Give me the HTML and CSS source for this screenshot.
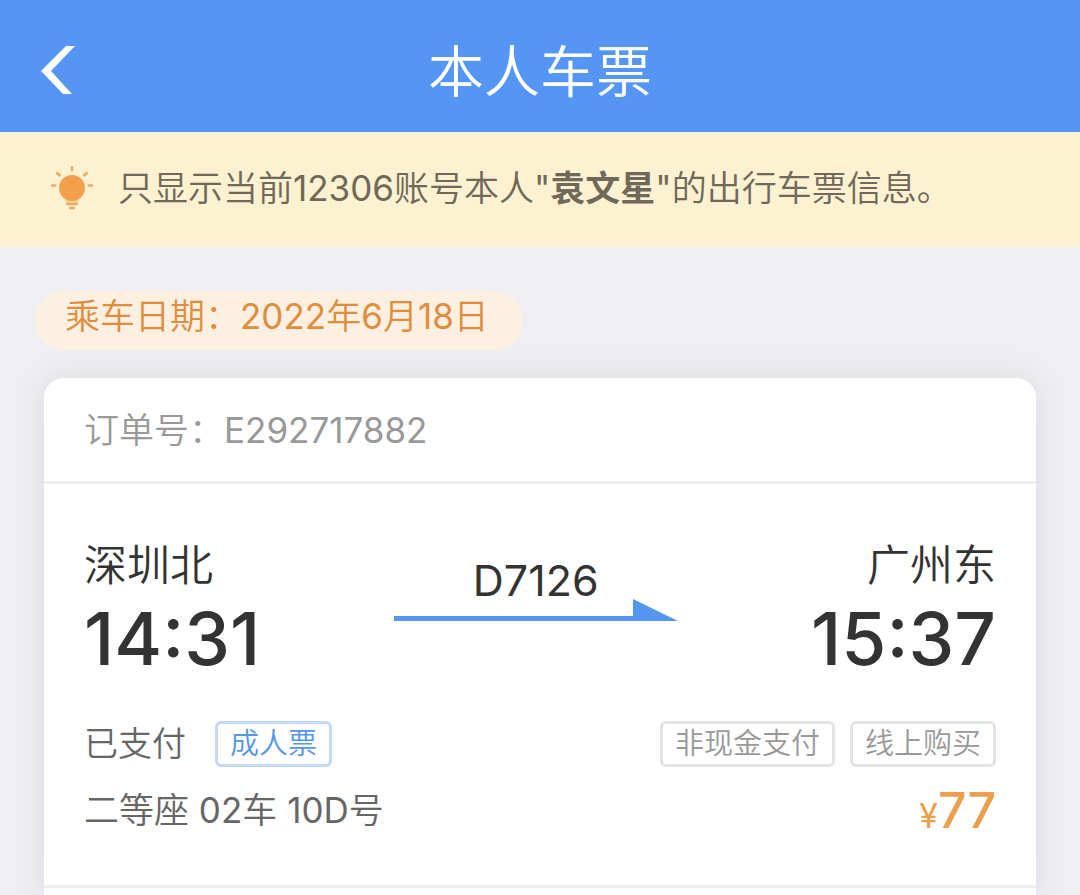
FILE: index.html
```html
<!DOCTYPE html>
<html lang="zh-CN">
<head>
<meta charset="utf-8">
<meta name="viewport" content="width=device-width, initial-scale=1">
<title>本人车票</title>
<link rel="stylesheet" href="styles.css">
</head>
<body class="page">
<header class="topbar">
  <button class="back" type="button" aria-label="返回">
    <svg class="back-icon" viewBox="0 0 34 48" aria-hidden="true"><path d="M25 0H34L10 25L31 48H22L0 25Z" fill="#fff"/></svg>
  </button>
  <h1 class="title">本人车票</h1>
</header>
<div class="notice">
  <svg class="bulb" viewBox="0 0 44 44" aria-hidden="true">
    <path d="M15 34H29L27 37H17Z" fill="#f8cf96"/>
    <circle cx="22" cy="22" r="13" fill="#f2a04c"/>
    <g fill="none" stroke="#eeaa62" stroke-width="2.5">
      <path d="M22 0V5M6.500 6.500L10.500 10M37.500 6.500L33.500 10M1 19.500H6.500M37.500 19.500H43"/>
      <path d="M16 38H28M19 42H25"/>
    </g>
  </svg>
  <p class="notice-text">只显示当前<span class="num">12306</span>账号本人<span class="num">"</span><strong>袁文星</strong><span class="num">"</span>的出行车票信息。</p>
</div>
<main class="content">
  <p class="date">乘车日期：<span class="num">2022</span>年<span class="num">6</span>月<span class="num">18</span>日</p>
  <article class="card">
    <p class="order">订单号：<span class="num">E292717882</span></p>
    <section class="ticket">
      <div class="journey">
        <div class="stop">
          <p class="station">深圳北</p>
          <p class="time">14:31</p>
        </div>
        <div class="route">
          <p class="train num">D7126</p>
          <svg class="arrow" viewBox="0 0 284 22" aria-hidden="true"><path d="M0 17H239V0L284 22H0Z" fill="#5596f0"/></svg>
        </div>
        <div class="stop stop-end">
          <p class="station">广州东</p>
          <p class="time">15:37</p>
        </div>
      </div>
      <div class="status">
        <span class="paid">已支付</span>
        <span class="tag tag-blue">成人票</span>
        <span class="tag tag-first">非现金支付</span>
        <span class="tag">线上购买</span>
      </div>
      <div class="seat-row">
        <p class="seat">二等座<span class="num"> 02</span>车<span class="num"> 10D</span>号</p>
        <p class="price"><span class="yen">¥</span>77</p>
      </div>
    </section>
  </article>
</main>
</body>
</html>
```
FILE: styles.css
```css
* { box-sizing: border-box; }
.page {
  margin: 0;
  min-height: 100vh;
  display: flex;
  flex-direction: column;
  background: #eeeef3;
  color: #333;
  font-family: Inter, "Noto Sans CJK SC", sans-serif;
  font-size: 34px;
  font-weight: 350;
  line-height: 60px;
}
p, h1 { margin: 0; }
svg { display: block; }
.num { font-weight: 400; }
.topbar {
  display: grid;
  grid-template-columns: 120px 1fr 120px;
  align-items: center;
  height: 132px;
  padding-top: 12px;
  background: #5596f4;
  color: #fff;
}
.back {
  height: 84px;
  padding: 0 0 4px 41px;
  border: 0;
  background: none;
}
.back-icon { width: 34px; height: 48px; }
.title {
  font-size: 56px;
  font-weight: 350;
  line-height: 80px;
  text-align: center;
}
.notice {
  display: flex;
  align-items: center;
  gap: 24px;
  padding: 26px 50px 29px;
  background: #fcf2d2;
  color: #706858;
  font-size: 35px;
}
.bulb { flex: none; width: 44px; height: 44px; }
.notice-text strong { font-weight: 700; }
.content {
  flex: 1;
  display: flex;
  flex-direction: column;
  padding: 44px 44px 0;
}
.date {
  align-self: flex-start;
  margin-left: -9px;
  padding: 0 34px 8px 30px;
  border-radius: 30px;
  background: #fdf0e0;
  color: #df8e3f;
  font-size: 35px;
  line-height: 51px;
}
.card {
  flex: 1;
  margin-top: 28px;
  border-radius: 20px 20px 0 0;
  background: #fff;
  box-shadow: 0 0 32px rgba(60, 60, 80, 0.1);
}
.order {
  padding: 22px 40px 21px;
  border-bottom: 3px solid #efeff0;
  color: #999;
}
.ticket {
  padding: 51px 40px 39px;
  border-bottom: 3px solid #efeff0;
}
.order, .seat { font-size: 35px; }
.journey {
  display: flex;
  justify-content: space-between;
}
.stop-end { text-align: right; }
.station { font-size: 43px; }
.time {
  font-size: 73px;
  font-weight: 500;
  line-height: 88px;
}
.route { padding-top: 26px; text-align: center; }
.train { font-size: 43px; line-height: 38px; }
.arrow { width: 284px; height: 22px; }
.status {
  display: flex;
  align-items: center;
  gap: 15px;
  margin-top: 38px;
  line-height: 46px;
  color: #666;
}
.paid { margin-right: 14px; }
.tag {
  padding: 0 12px;
  border: 3px solid #e4e4e4;
  border-radius: 6px;
  color: #999;
  font-size: 29px;
  line-height: 40px;
}
.tag-blue { border-color: #c3d9f5; color: #5596e8; }
.tag-first { margin-left: auto; }
.seat-row {
  display: flex;
  justify-content: space-between;
  margin-top: 13px;
}
.seat { color: #666; }
.price {
  color: #eba04f;
  font-size: 50px;
  font-weight: 500;
}
.yen { font-size: 34px; font-weight: 400; }
```
